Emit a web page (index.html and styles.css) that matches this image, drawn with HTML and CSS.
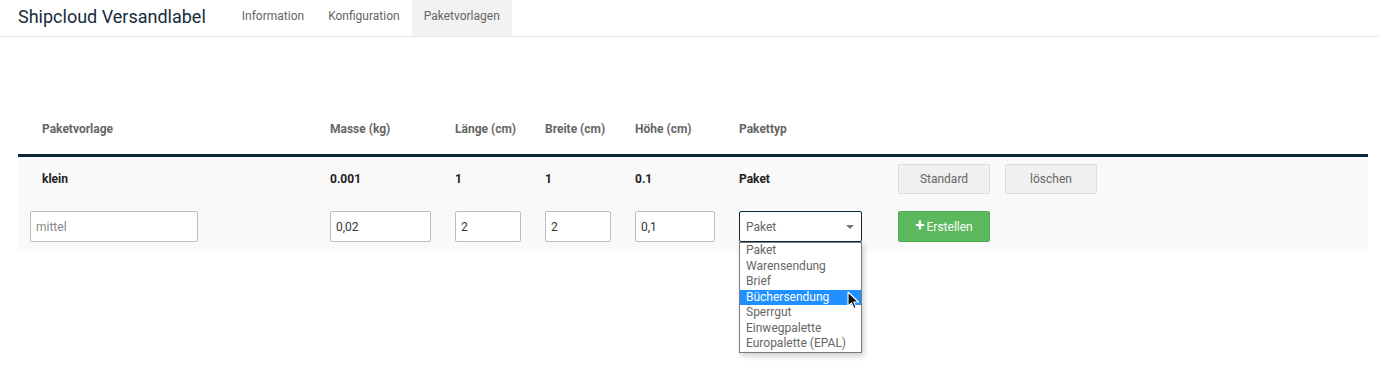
FILE: index.html
```html
<!DOCTYPE html>
<html lang="de">
<head>
<meta charset="utf-8">
<title>Shipcloud Versandlabel</title>
<link rel="stylesheet" href="styles.css">
</head>
<body>
<header class="topbar">
  <div class="brand">Shipcloud Versandlabel</div>
  <nav class="nav">
    <a class="nav-item">Information</a>
    <a class="nav-item">Konfiguration</a>
    <a class="nav-item active">Paketvorlagen</a>
  </nav>
</header>
<main class="main">
  <div class="tbl">
    <div class="row head">
      <div class="cell first">Paketvorlage</div>
      <div class="cell">Masse (kg)</div>
      <div class="cell">Länge (cm)</div>
      <div class="cell">Breite (cm)</div>
      <div class="cell">Höhe (cm)</div>
      <div class="cell">Pakettyp</div>
      <div class="cell"></div>
    </div>
    <div class="row data">
      <div class="cell first">klein</div>
      <div class="cell">0.001</div>
      <div class="cell">1</div>
      <div class="cell">1</div>
      <div class="cell">0.1</div>
      <div class="cell">Paket</div>
      <div class="cell actions">
        <button class="btn btn-default">Standard</button>
        <button class="btn btn-default">löschen</button>
      </div>
    </div>
    <div class="row form">
      <div class="cell inset"><input class="inp w-name" type="text" placeholder="mittel"></div>
      <div class="cell"><input class="inp w-mass" type="text" value="0,02"></div>
      <div class="cell"><input class="inp w-dim" type="text" value="2"></div>
      <div class="cell"><input class="inp w-dim" type="text" value="2"></div>
      <div class="cell"><input class="inp w-h" type="text" value="0,1"></div>
      <div class="cell">
        <div class="select">
          <span class="select-val">Paket</span>
          <span class="caret"></span>
          <ul class="dropdown">
            <li>Paket</li>
            <li>Warensendung</li>
            <li>Brief</li>
            <li class="hl">Büchersendung</li>
            <li>Sperrgut</li>
            <li>Einwegpalette</li>
            <li>Europalette (EPAL)</li>
          </ul>
          <svg class="cursor" width="14" height="20" viewBox="0 0 14 20" aria-hidden="true">
            <path d="M1 1 L1 15 L4.5 11.8 L7 17.5 L9.2 16.5 L6.8 11 L11.5 11 Z" fill="#111" stroke="#fff" stroke-width="1.1" stroke-linejoin="round"/>
          </svg>
        </div>
      </div>
      <div class="cell actions">
        <button class="btn btn-success"><span class="plus">+</span>Erstellen</button>
      </div>
    </div>
  </div>
</main>
</body>
</html>
```

FILE: styles.css
```css
* { box-sizing: border-box; }

html, body {
  height: 100%;
}

body {
  margin: 0;
  min-height: 385px;
  font-family: Roboto, "Noto Sans", Arial, sans-serif;
  font-size: 12px;
  color: #333;
  background: #fff;
}

.topbar {
  display: flex;
  align-items: stretch;
  height: 37px;
  border-bottom: 1px solid #e6e6e6;
  padding-left: 18px;
}

.brand {
  display: flex;
  align-items: center;
  font-size: 18px;
  color: #142c3c;
  margin-right: 24px;
  padding-bottom: 3px;
}

.nav {
  display: flex;
}

.nav-item {
  display: flex;
  align-items: center;
  padding: 0 12px 4px;
  font-size: 12px;
  color: #666;
}

.nav-item.active {
  background: #f2f2f2;
}

.main {
  padding: 67px 11px 0 18px;
}

.row {
  display: grid;
  grid-template-columns: 312px 125px 90px 90px 104px 159px 1fr;
  align-items: center;
}

.cell {
  font-size: 12px;
}

.cell.first {
  padding-left: 24px;
}

.cell.inset {
  padding-left: 12px;
}

.row.head {
  height: 50px;
  border-bottom: 3px solid #0c2738;
  box-sizing: content-box;
}

.row.head .cell {
  font-weight: bold;
  color: #666;
}

.row.data {
  height: 44px;
  background: #f9f9f9;
}

.row.data .cell {
  font-weight: bold;
  color: #222;
}

.row.form {
  height: 50px;
  background: #f9f9f9;
  padding-top: 1px;
}

.actions {
  display: flex;
  gap: 15px;
}

.btn {
  font-family: inherit;
  font-size: 12px;
  height: 30px;
  width: 92px;
  border-radius: 2px;
  cursor: default;
}

.btn-default {
  background: #f0f0f0;
  border: 1px solid #dcdcdc;
  color: #666;
  font-weight: normal;
}

.row.data .btn-default {
  font-weight: normal;
  color: #666;
}

.btn-success {
  width: 92px;
  height: 31px;
  background: #5cb85c;
  border: 1px solid #4cae4c;
  color: #fff;
  display: flex;
  align-items: center;
  justify-content: center;
  gap: 2px;
}

.plus {
  font-size: 17px;
  font-weight: bold;
  line-height: 1;
  margin-top: -2px;
}

.inp {
  height: 31px;
  border: 1px solid #bdbdbd;
  border-radius: 2px;
  background: #fff;
  font-family: inherit;
  font-size: 12px;
  color: #333;
  padding: 0 5px;
  outline: none;
}

.inp::placeholder {
  color: #888;
}

.w-name { width: 168px; }
.w-mass { width: 101px; }
.w-dim { width: 66px; }
.w-h { width: 80px; }

.select {
  position: relative;
  width: 123px;
  height: 31px;
  border: 1px solid #0c2738;
  border-radius: 2px;
  background: #fff;
  display: flex;
  align-items: center;
  padding-left: 6px;
  color: #666;
}

.caret {
  position: absolute;
  right: 7px;
  top: 13px;
  width: 0;
  height: 0;
  border-left: 4px solid transparent;
  border-right: 4px solid transparent;
  border-top: 4px solid #777;
}

.dropdown {
  position: absolute;
  left: -1px;
  top: 30px;
  width: 123px;
  margin: 0;
  padding: 0;
  list-style: none;
  background: #fff;
  border: 1px solid #7a7a7a;
  box-shadow: 2px 3px 6px rgba(0, 0, 0, 0.2);
  z-index: 5;
}

.dropdown li {
  height: 15.5px;
  line-height: 15.5px;
  padding-left: 6px;
  font-size: 12px;
  color: #666;
  white-space: nowrap;
}

.dropdown li.hl {
  background: #1e90ff;
  color: #fff;
}

.cursor {
  position: absolute;
  left: 107px;
  top: 79px;
  z-index: 6;
}
```
